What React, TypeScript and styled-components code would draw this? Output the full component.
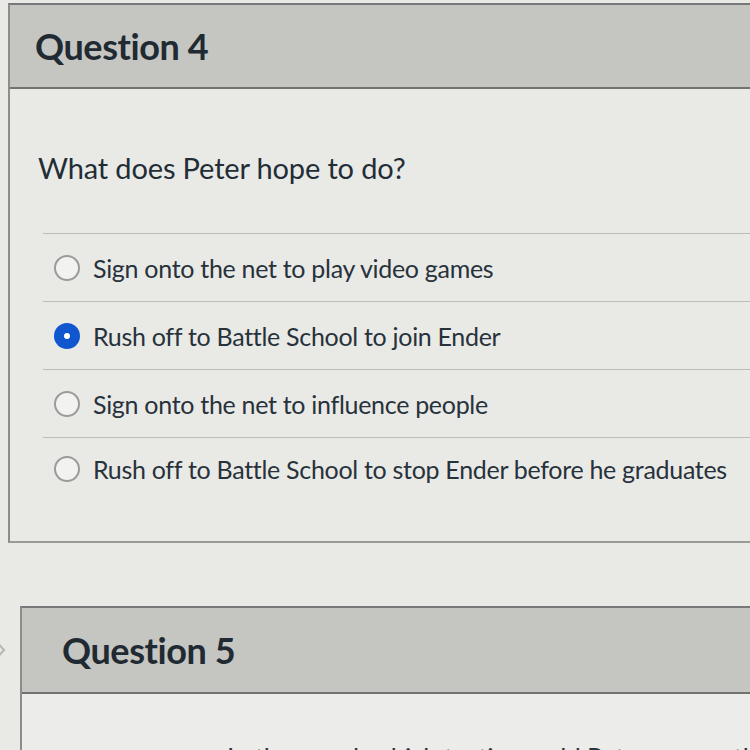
import styled, { createGlobalStyle } from "styled-components";

const GlobalStyle = createGlobalStyle`
  body {
    margin: 0;
    background: #e9e9e6;
    font-family: Lato, "Open Sans", sans-serif;
    color: #2d3b45;
    overflow: hidden;
  }
`;

const Page = styled.div`
  width: 750px;
  height: 750px;
  overflow: hidden;
  padding-top: 3px;
  box-sizing: border-box;
`;

const Card = styled.section<{ $indent: number }>`
  margin-left: ${(p) => p.$indent}px;
  border-top: 2px solid #77787a;
  border-left: 2px solid #8b8c8c;
  border-bottom: 2px solid #9a9a98;
  background: #e9e9e6;
`;

const Header = styled.div<{ $pad: number; $height: number }>`
  height: ${(p) => p.$height}px;
  display: flex;
  align-items: center;
  padding-left: ${(p) => p.$pad}px;
  background: #c5c5c1;
  border-bottom: 2px solid #727371;
  font-size: 36px;
  font-weight: 700;
  letter-spacing: -0.4px;
  color: #1f2a33;
`;

const Body = styled.div`
  padding: 62px 0 41px 28px;
`;

const Prompt = styled.p`
  margin: 0;
  font-size: 29px;
  line-height: 34px;
  letter-spacing: -0.15px;
  color: #222d36;
`;

const Options = styled.ul`
  list-style: none;
  margin: 48px 0 0 5px;
  padding: 0;
  border-top: 1px solid #bcbcb8;
`;

const Option = styled.li`
  height: 67px;
  display: flex;
  align-items: center;
  gap: 13px;
  padding-left: 11px;
  border-bottom: 1px solid #bcbcb8;
  font-size: 25px;
  letter-spacing: -0.3px;
  color: #27323b;

  &:last-child {
    border-bottom: none;
    height: 62px;
  }
`;

const Radio = styled.span<{ $checked: boolean }>`
  width: 26px;
  height: 26px;
  flex: none;
  box-sizing: border-box;
  border-radius: 50%;
  display: flex;
  align-items: center;
  justify-content: center;
  background: ${(p) => (p.$checked ? "#0f56cf" : "#f2f2f0")};
  border: ${(p) => (p.$checked ? "none" : "2px solid #9a9b9b")};

  &::after {
    content: "";
    display: ${(p) => (p.$checked ? "block" : "none")};
    width: 6px;
    height: 6px;
    border-radius: 50%;
    background: #ffffff;
  }
`;

const Gap = styled.div`
  height: 63px;
`;

const Row = styled.div`
  display: flex;
  align-items: flex-start;
`;

const Gutter = styled.div`
  width: 20px;
  flex: none;
  height: 88px;
  display: flex;
  align-items: center;
  overflow: hidden;
`;

const NextBody = styled.div`
  background: #ececea;
  padding: 48px 0 0 205px;
  height: 60px;
  font-size: 26px;
  letter-spacing: -0.2px;
  white-space: nowrap;
  color: #2a343d;
`;

const options = [
  { label: "Sign onto the net to play video games", checked: false },
  { label: "Rush off to Battle School to join Ender", checked: true },
  { label: "Sign onto the net to influence people", checked: false },
  { label: "Rush off to Battle School to stop Ender before he graduates", checked: false },
];

export default function App() {
  return (
    <Page>
      <GlobalStyle />
      <Card $indent={8}>
        <Header $pad={25} $height={82}>Question 4</Header>
        <Body>
          <Prompt>What does Peter hope to do?</Prompt>
          <Options>
            {options.map((o) => (
              <Option key={o.label}>
                <Radio $checked={o.checked} />
                {o.label}
              </Option>
            ))}
          </Options>
        </Body>
      </Card>
      <Gap />
      <Row>
        <Gutter>
          <svg width="10" height="20" viewBox="0 0 10 20" style={{ marginLeft: -4 }}>
            <path d="M1 2 L8 10 L1 18" fill="none" stroke="#b5b6b6" strokeWidth="2" />
          </svg>
        </Gutter>
        <Card $indent={0} style={{ flex: 1 }}>
          <Header $pad={40} $height={84}>Question 5</Header>
          <NextBody>In the novel, which tactic would Peter use on the net?</NextBody>
        </Card>
      </Row>
    </Page>
  );
}
